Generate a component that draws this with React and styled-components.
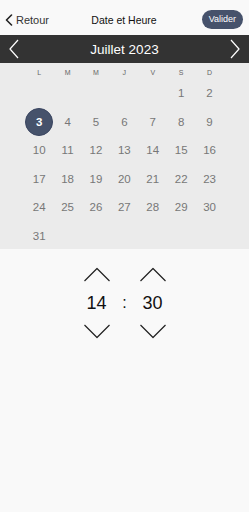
import React, { useState } from 'react';
import styled, { createGlobalStyle } from 'styled-components';

const GlobalStyle = createGlobalStyle`
  html, body {
    margin: 0;
    padding: 0;
    background: #f9f9f9;
    font-family: "Liberation Sans", Arial, sans-serif;
  }
`;

const Screen = styled.div`
  width: 249px;
  height: 512px;
  background: #f9f9f9;
  display: flex;
  flex-direction: column;
`;

const TopBar = styled.div`
  height: 35px;
  display: grid;
  grid-template-columns: 1fr auto 1fr;
  align-items: center;
  padding: 4px 6px 0 5px;
  box-sizing: border-box;
`;

const BackButton = styled.div`
  display: flex;
  align-items: center;
  gap: 3px;
  font-size: 11px;
  color: #333;
`;

const Title = styled.div`
  font-size: 10.5px;
  color: #111;
`;

const ValidateButton = styled.div`
  justify-self: end;
  background: #46526b;
  color: #fff;
  font-size: 9px;
  border-radius: 10px;
  padding: 4px 7px 5px;
`;

const MonthBar = styled.div`
  height: 28px;
  background: #333333;
  display: flex;
  align-items: center;
  justify-content: space-between;
  padding: 0 9px;
`;

const MonthLabel = styled.div`
  color: #fff;
  font-size: 13.5px;
`;

const Calendar = styled.div`
  background: #ebebeb;
  padding: 5px 25px 0;
  height: 186px;
  box-sizing: border-box;
`;

const Grid = styled.div`
  display: grid;
  grid-template-columns: repeat(7, 28.4px);
`;

const WeekDay = styled.div`
  text-align: center;
  font-size: 7px;
  color: #666;
  height: 10px;
  line-height: 10px;
  margin-bottom: 1px;
`;

const Day = styled.div`
  height: 28.5px;
  display: flex;
  align-items: center;
  justify-content: center;
  font-size: 11.5px;
  color: #777;
`;

const Selected = styled.div`
  width: 28px;
  height: 28px;
  border-radius: 50%;
  background: #46526b;
  color: #fff;
  font-weight: bold;
  display: flex;
  align-items: center;
  justify-content: center;
  border: 1px solid #3a4560;
  box-sizing: border-box;
`;

const TimePicker = styled.div`
  display: flex;
  justify-content: center;
  align-items: center;
  gap: 5px;
  margin-top: 18px;
`;

const TimeColumn = styled.div`
  display: flex;
  flex-direction: column;
  align-items: center;
  gap: 10px;
  width: 38px;
`;

const TimeValue = styled.div`
  font-size: 18px;
  color: #111;
  line-height: 22px;
`;

const Separator = styled.div`
  font-size: 16px;
  color: #111;
  width: 8px;
  text-align: center;
`;

const Chevron = ({ dir, color = '#222' }) => (
  <svg width="28" height="15" viewBox="0 0 28 15" fill="none">
    <path
      d={dir === 'up' ? 'M1.5 14 L14 1.5 L26.5 14' : 'M1.5 1 L14 13.5 L26.5 1'}
      stroke={color}
      strokeWidth="1.2"
      strokeLinejoin="round"
    />
  </svg>
);

const weekDays = ['L', 'M', 'M', 'J', 'V', 'S', 'D'];

const App = () => {
  const [selected] = useState(3);
  const cells = [...Array(5).fill(null), ...Array.from({ length: 31 }, (_, i) => i + 1)];

  return (
    <Screen>
      <GlobalStyle />
      <TopBar>
        <BackButton>
          <svg width="8" height="12" viewBox="0 0 8 12" fill="none">
            <path d="M6.5 1 L1.5 6 L6.5 11" stroke="#222" strokeWidth="1.6" strokeLinecap="round" strokeLinejoin="round" />
          </svg>
          Retour
        </BackButton>
        <Title>Date et Heure</Title>
        <ValidateButton>Valider</ValidateButton>
      </TopBar>

      <MonthBar>
        <svg width="10" height="20" viewBox="0 0 10 20" fill="none">
          <path d="M9 1 L1 10 L9 19" stroke="#fff" strokeWidth="1.2" strokeLinejoin="round" />
        </svg>
        <MonthLabel>Juillet 2023</MonthLabel>
        <svg width="10" height="20" viewBox="0 0 10 20" fill="none">
          <path d="M1 1 L9 10 L1 19" stroke="#fff" strokeWidth="1.2" strokeLinejoin="round" />
        </svg>
      </MonthBar>

      <Calendar>
        <Grid>
          {weekDays.map((d, i) => (
            <WeekDay key={i}>{d}</WeekDay>
          ))}
          {cells.map((d, i) => (
            <Day key={i}>{d === selected ? <Selected>{d}</Selected> : d}</Day>
          ))}
        </Grid>
      </Calendar>

      <TimePicker>
        <TimeColumn>
          <Chevron dir="up" />
          <TimeValue>14</TimeValue>
          <Chevron dir="down" />
        </TimeColumn>
        <Separator>:</Separator>
        <TimeColumn>
          <Chevron dir="up" />
          <TimeValue>30</TimeValue>
          <Chevron dir="down" />
        </TimeColumn>
      </TimePicker>
    </Screen>
  );
};

export default App;
